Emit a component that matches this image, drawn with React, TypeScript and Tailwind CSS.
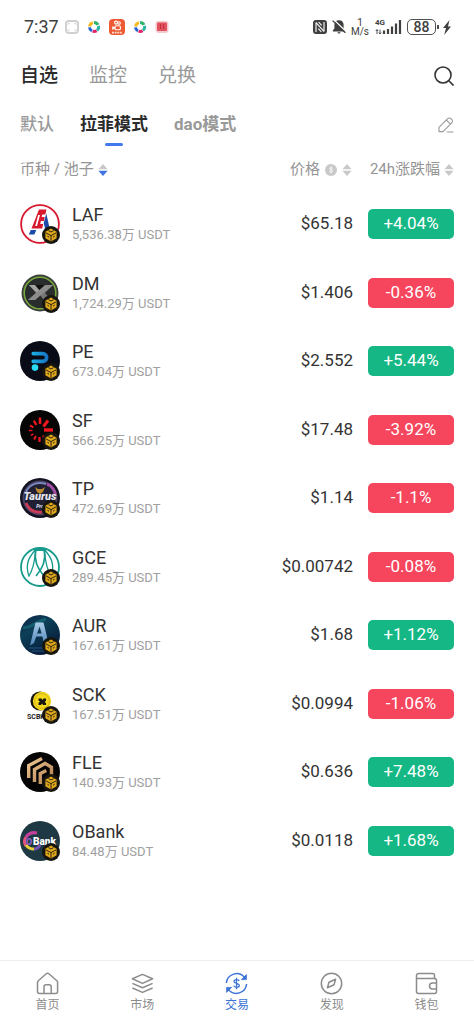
import type { ReactNode } from 'react';

type Token = {
  symbol: string;
  pool: string;
  price: string;
  change: string;
  logo: ReactNode;
};

const LafLogo = () => (
  <>
    <circle cx="20" cy="20" r="18.9" fill="#fff" stroke="#d8182c" strokeWidth="1.8" />
    <path d="M19 5.5h7.5l-1.2 5h-3l-.6 2.6h3l-.8 4h-3l-.7 2.8h3l-1 4.6H11.5z" fill="#d8182c" />
    <path d="M18.2 11h1.8l-3 11h-1.8z" fill="#fff" />
    <path d="M26.3 9.5l3.6 16h-4.6l-1.6-6.5z" fill="#1b4aa8" />
    <path d="M10.8 26h5.4l-1.8 4.5H8.8z" fill="#1b4aa8" />
  </>
);

const DmLogo = () => (
  <>
    <circle cx="20" cy="20" r="18.5" fill="#3c3f3d" />
    <circle cx="20" cy="20" r="15.8" fill="#292c2c" stroke="#78a93a" strokeWidth="1.5" />
    <path d="M9 12h7l4 6 5-6h8l-8 8 6 7h-7l-4-5-5 5H8l8-7z" fill="#777" />
    <path d="M9 12h7l4 5.5-3 2.5z" fill="#a4a4a2" />
    <path d="M15 12h11l-6 6z" fill="#101111" />
    <path d="M8 27l17-15h8L15 27z" fill="#8c8c8a" />
  </>
);

const PeLogo = () => (
  <>
    <defs>
      <linearGradient id="pe" gradientUnits="userSpaceOnUse" x1="11" y1="0" x2="28" y2="0">
        <stop offset="0" stopColor="#1bb8e8" />
        <stop offset="1" stopColor="#176fc2" />
      </linearGradient>
    </defs>
    <circle cx="20" cy="20" r="20" fill="#090c16" />
    <path d="M13.2 12.6h9.6a3.8 3.8 0 0 1 0 7.8h-9.6" fill="none" stroke="url(#pe)" strokeWidth="3.6" strokeLinecap="round" />
    <circle cx="15" cy="26.6" r="3.3" fill="#29dcf4" />
  </>
);

const SfLogo = () => (
  <>
    <circle cx="20" cy="20" r="20" fill="#050505" />
    <g stroke="#ee171f" strokeLinecap="butt">
      <path d="M24 20h9" strokeWidth="3.4" />
      <path d="M23.5 16.5l4.5-6" strokeWidth="3" />
      <path d="M20 14V7.5" strokeWidth="2.6" />
      <path d="M16.4 15l-2.6-4.4" strokeWidth="2.2" />
      <path d="M13.4 17.4l-3.4-2" strokeWidth="1.8" />
      <path d="M12.4 20.5H8.8" strokeWidth="1.4" />
      <path d="M13.4 24l-2.6 1.4" strokeWidth="1.6" />
      <path d="M16 26l-2 3.4" strokeWidth="2" />
      <path d="M19.5 27v5" strokeWidth="2.3" />
      <path d="M23 25.5l2.4 4.2" strokeWidth="2.5" />
    </g>
  </>
);

const TpLogo = () => (
  <>
    <circle cx="20" cy="20" r="20" fill="#111320" />
    <circle cx="20" cy="20" r="16.5" fill="#211f34" stroke="#4b4264" strokeWidth="2" />
    <path d="M6 14C10 5 19 4 26 6" fill="none" stroke="#7887bd" strokeWidth="2" />
    <path d="M27 6c5 2 8 7 8.5 11" fill="none" stroke="#a04da2" strokeWidth="3" />
    <path d="M6 25c3 7 9 10 16 9" fill="none" stroke="#c63b55" strokeWidth="3" />
    <path d="M15 9l3 2h4l3-2-2 5-3 2-3-2z" fill="#ba8a2e" />
    <text x="20" y="22" textAnchor="middle" fontSize="11" fontWeight="900" fontStyle="italic" fill="#e4e4ea">Taurus</text>
    <text x="20" y="29.5" textAnchor="middle" fontSize="5" fontWeight="900" fontStyle="italic" fill="#dcdce2">Pro</text>
  </>
);

const GceLogo = () => (
  <g fill="none" stroke="#159a8b" strokeWidth="1.3">
    <circle cx="20" cy="20" r="19" fill="#fff" strokeWidth="1.8" />
    <path d="M14.5 2c3-1.4 8-1.4 11 0l1.5 3.4c-4-1.8-10-1.8-14 0z" fill="#159a8b" stroke="none" />
    <path d="M14.5 4C8 11 5.5 20 9 29c3.6-6 5.6-14 6.5-24" />
    <path d="M25.5 4c6.5 7 9 16 5.5 25-3.6-6-5.6-14-6.5-24" />
    <path d="M15.6 4c-1.6 9 1.4 17 8.4 25" strokeWidth="1.7" />
    <path d="M24.4 4c1.6 9-1.4 17-8.4 25" strokeWidth="1.7" />
  </g>
);

const AurLogo = () => (
  <>
    <defs>
      <linearGradient id="aurSky" x1="0" y1="0" x2="0.6" y2="1">
        <stop offset="0" stopColor="#0b2142" />
        <stop offset="0.4" stopColor="#0c4058" />
        <stop offset="1" stopColor="#071a38" />
      </linearGradient>
      <linearGradient id="aurA" x1="0" y1="0" x2="0" y2="1">
        <stop offset="0" stopColor="#a9cbe8" />
        <stop offset="1" stopColor="#4d83b8" />
      </linearGradient>
    </defs>
    <circle cx="20" cy="20" r="20" fill="url(#aurSky)" />
    <path d="M3 13c10-1 14-7 23-9" fill="none" stroke="#19808a" strokeWidth="3" opacity="0.5" />
    <path d="M15.5 7.5h8L28 26h-4.6l-1-4.6h-6.2L14 28l-4 2.4zM19.6 11.5L17 18.6h4.6z" fill="url(#aurA)" fillRule="evenodd" />
    <path d="M9 33h14M12 36h12" stroke="#2e6a9d" opacity="0.7" />
  </>
);

const SckLogo = () => (
  <>
    <circle cx="20" cy="17" r="9.6" fill="#15140e" />
    <circle cx="22" cy="17" r="9.2" fill="#f4d81c" />
    <circle cx="22" cy="17" r="7.4" fill="none" stroke="#c7aa13" strokeWidth="0.7" />
    <path d="M18.5 14.5h3l1 1.5 1-1.5h2.5v2.2L24.5 18l1.5 1v2h-3l-1-1.5-1 1.5h-2.5v-2.2L20 17.6l-1.5-1z" fill="#17160f" />
    <text x="7" y="35" fontSize="7" fontWeight="700" fill="#1a1a1a">SCBK</text>
  </>
);

const FleLogo = () => (
  <>
    <defs>
      <linearGradient id="fle" gradientUnits="userSpaceOnUse" x1="6" y1="6" x2="34" y2="34">
        <stop offset="0" stopColor="#f0cc98" />
        <stop offset="1" stopColor="#ac7847" />
      </linearGradient>
    </defs>
    <circle cx="20" cy="20" r="20" fill="#050404" />
    <g fill="none" stroke="url(#fle)" strokeWidth="3.4">
      <path d="M8.7 26V13.6L22 6.6" />
      <path d="M14.5 30V17.4l10.5-6 6.5 3.8V26" />
      <path d="M20.3 32V21.6l6-3.2" />
    </g>
  </>
);

const ObankLogo = () => (
  <>
    <circle cx="20" cy="20" r="20" fill="#1e3943" />
    <g fill="none" strokeWidth="3">
      <path d="M17 12c-4-1-8 0-11 4" stroke="#c53f9d" />
      <path d="M6 16c-2 3-2 6 0 9" stroke="#e4547b" />
      <path d="M6 24c2 3 5 4 8 4" stroke="#e8cf3c" />
      <path d="M14 28c3 0 5-2 6-4" stroke="#7453b4" />
    </g>
    <text x="6" y="23.5" fontSize="9" fontWeight="900" fill="#8e62c9">O</text>
    <text x="13" y="23.5" fontSize="10" fontWeight="900" fill="#fff">Bank</text>
  </>
);

const tokens: Token[] = [
  { symbol: 'LAF', pool: '5,536.38万 USDT', price: '$65.18', change: '+4.04%', logo: <LafLogo /> },
  { symbol: 'DM', pool: '1,724.29万 USDT', price: '$1.406', change: '-0.36%', logo: <DmLogo /> },
  { symbol: 'PE', pool: '673.04万 USDT', price: '$2.552', change: '+5.44%', logo: <PeLogo /> },
  { symbol: 'SF', pool: '566.25万 USDT', price: '$17.48', change: '-3.92%', logo: <SfLogo /> },
  { symbol: 'TP', pool: '472.69万 USDT', price: '$1.14', change: '-1.1%', logo: <TpLogo /> },
  { symbol: 'GCE', pool: '289.45万 USDT', price: '$0.00742', change: '-0.08%', logo: <GceLogo /> },
  { symbol: 'AUR', pool: '167.61万 USDT', price: '$1.68', change: '+1.12%', logo: <AurLogo /> },
  { symbol: 'SCK', pool: '167.51万 USDT', price: '$0.0994', change: '-1.06%', logo: <SckLogo /> },
  { symbol: 'FLE', pool: '140.93万 USDT', price: '$0.636', change: '+7.48%', logo: <FleLogo /> },
  { symbol: 'OBank', pool: '84.48万 USDT', price: '$0.0118', change: '+1.68%', logo: <ObankLogo /> },
];

const ChainBadge = () => (
  <svg viewBox="0 0 18 18" className="absolute right-0 bottom-0 w-[18px] h-[18px]" aria-hidden="true">
    <circle cx="9" cy="9" r="9" fill="#17150f" />
    <path d="M9 2.6l5.6 3.1v6.6L9 15.4l-5.6-3.1V5.7z" fill="#e0a81c" />
    <path d="M3.8 6.8L9 9.6l5.2-2.8M9 9.6v5.5M6.4 4.6L9 6l2.6-1.4M5.4 10.2l1.6 1M12.6 10.2l-1.6 1" fill="none" stroke="#17150f" strokeWidth="0.9" />
  </svg>
);

const PinwheelIcon = () => (
  <svg viewBox="0 0 14 14" className="w-[14px] h-[14px]" aria-hidden="true">
    <g fill="none" strokeWidth="3">
      <path d="M2.6 6.5A4.5 4.5 0 0 1 6 2.6" stroke="#f5b921" />
      <path d="M7 2.5a4.5 4.5 0 0 1 4 2.4" stroke="#32b36b" />
      <path d="M11.5 5.8a4.5 4.5 0 0 1-1.6 4.6" stroke="#2bb5a4" />
      <path d="M9.6 10.8a4.5 4.5 0 0 1-4 .4" stroke="#e2246d" />
      <path d="M5 11a4.5 4.5 0 0 1-2.5-3.6" stroke="#2464d8" />
    </g>
  </svg>
);

const StatusBar = () => (
  <div className="flex items-center justify-between h-[54px] pl-6 pr-[23px] text-[#404040]">
    <div className="flex items-center gap-2">
      <span className="text-lg -mr-0.5">7:37</span>
      <svg viewBox="0 0 14 14" className="w-[14px] h-[14px]" aria-hidden="true">
        <rect x="1" y="1" width="12" height="12" rx="3" fill="#fff" stroke="#d0d0d0" strokeWidth="2" />
        <path d="M3 5V3.5h2M9 3.5h2V5M3 9v1.5h2M9 10.5h2V9" fill="none" stroke="#ddd" />
      </svg>
      <PinwheelIcon />
      <svg viewBox="0 0 16 16" className="w-4 h-4" aria-hidden="true">
        <rect x="0" y="0" width="16" height="16" rx="4" fill="#ee5a33" />
        <g fill="none" stroke="#fff" strokeWidth="1.1">
          <circle cx="7" cy="3.6" r="1.5" />
          <circle cx="10" cy="4" r="1.3" />
          <rect x="6" y="6.8" width="5.4" height="4" rx="1.3" />
          <path d="M3.8 8l2 .8-2 1.2z" />
        </g>
        <path d="M3 13.6h10" stroke="#fbd9c6" strokeWidth="1.8" strokeDasharray="2 .6" />
      </svg>
      <PinwheelIcon />
      <svg viewBox="0 0 14 14" className="w-[14px] h-[14px]" aria-hidden="true">
        <rect x="0.5" y="1" width="13" height="12" rx="3" fill="#f6c9cc" />
        <rect x="2" y="2.5" width="10" height="8.5" rx="1" fill="#e0525e" />
        <path d="M5.5 4v5M8.5 4v5" stroke="#c22f3e" />
      </svg>
    </div>
    <div className="flex items-center gap-1">
      <svg viewBox="0 0 14 14" className="w-[14px] h-[14px]" aria-hidden="true">
        <rect x="0" y="0" width="14" height="14" rx="3" fill="#404040" />
        <path d="M3 12V2.4M11 11.6V2" stroke="#fff" strokeWidth="1.1" />
        <path d="M3 2.6l8 8.8M5.6 2l3 3.4M5.4 8.6l3 3.4" stroke="#fff" strokeWidth="1.1" />
      </svg>
      <svg viewBox="0 0 16 16" className="w-4 h-4" aria-hidden="true">
        <path d="M8 1.2c3 0 4.6 2 4.6 4.6v3.6l1.6 2.2v.8H1.8v-.8l1.6-2.2V5.8C3.4 3.2 5 1.2 8 1.2zM6.4 13.3h3.2c-.3 1.6-2.9 1.6-3.2 0z" fill="#404040" />
        <path d="M2.8 .8l13 12.4" stroke="#fff" strokeWidth="1.2" />
        <path d="M1.6 1.6l12.8 12.2" stroke="#404040" strokeWidth="1.3" />
      </svg>
      <span className="flex flex-col items-center w-[18px] text-[10px] leading-[9px]">
        <span>1</span>
        <span>M/s</span>
      </span>
      <span className="relative w-7 h-4 ml-0.5">
        <span className="absolute left-0 top-0 text-[8px] leading-[8px] font-bold">4G</span>
        <svg viewBox="0 0 28 16" className="w-7 h-4" aria-hidden="true">
          <path d="M2 15v-4.4M.8 12L2 10.6 3.2 12M5 10.6V15M3.8 13.6L5 15l1.2-1.4" fill="none" stroke="#404040" strokeWidth="0.9" />
          <path d="M9 15v-3.4M13 15v-5M17 15V7.6M21 15V4.6M25 15V1" stroke="#404040" strokeWidth="2.2" />
        </svg>
      </span>
      <span className="flex items-center">
        <span className="flex items-center justify-center w-[29px] h-4 border border-[#505050] rounded-[5px] text-sm leading-none font-medium">88</span>
        <span className="w-0.5 h-1 ml-px bg-[#505050]" />
      </span>
      <svg viewBox="0 0 8 15" className="w-2 h-[15px]" aria-hidden="true">
        <path d="M6.5 0L0 8h3L1.2 15 8 6.4H5z" fill="#404040" />
      </svg>
    </div>
  </div>
);

const SortIcon = ({ down = false }: { down?: boolean }) => (
  <svg viewBox="0 0 10 12" className="w-[10px] h-3 shrink-0" aria-hidden="true">
    <path d="M5 0l4.6 5.2H.4z" fill="#c9c9c9" />
    <path d="M5 12L.4 6.8h9.2z" fill={down ? '#3f74e3' : '#c9c9c9'} />
  </svg>
);

const TokenRow = ({ token }: { token: Token }) => (
  <tr className="h-[68px] even:h-[69px]">
    <td className="p-0">
      <div className="flex items-center gap-3">
        <span className="relative w-10 h-10 shrink-0">
          <svg viewBox="0 0 40 40" className="w-10 h-10" aria-hidden="true">
            {token.logo}
          </svg>
          <ChainBadge />
        </span>
        <div className="whitespace-nowrap">
          <p className="text-lg leading-[22px] text-[#333]">{token.symbol}</p>
          <p className="text-[13px] leading-[18px] text-[#a0a0a0]">{token.pool}</p>
        </div>
      </div>
    </td>
    <td className="p-0 pr-[15px] text-right text-[17px] text-[#333]">{token.price}</td>
    <td className="p-0 w-[86px]">
      <span
        className={`flex items-center justify-center h-[30px] rounded-[5px] text-[17px] text-white ${
          token.change.startsWith('+') ? 'bg-[#15b785]' : 'bg-[#f5465d]'
        }`}
      >
        {token.change}
      </span>
    </td>
  </tr>
);

const TokenTable = () => (
  <div className="px-5">
    <table className="w-full border-collapse">
      <thead className="text-[15px] text-[#949494]">
        <tr className="h-[38px]">
          <th className="p-0 pb-[3px] font-normal">
            <button className="flex items-center gap-1">
              币种 / 池子 <SortIcon down />
            </button>
          </th>
          <th className="p-0 pb-[3px] font-normal">
            <button className="flex items-center gap-[5px] ml-auto mr-4">
              价格
              <svg viewBox="0 0 12 12" className="w-3 h-3" aria-hidden="true">
                <circle cx="6" cy="6" r="6" fill="#c9c9c9" />
                <path d="M7.6 4.3c-.4-.8-3-.9-3 .4 0 1.4 3 .9 3 2.4 0 1.3-2.8 1.3-3.3.3M6 2.6v6.8" fill="none" stroke="#fff" strokeWidth="0.8" />
              </svg>
              <SortIcon />
            </button>
          </th>
          <th className="p-0 pb-[3px] w-[86px] font-normal">
            <button className="flex items-center gap-1 ml-auto whitespace-nowrap">
              24h涨跌幅 <SortIcon />
            </button>
          </th>
        </tr>
      </thead>
      <tbody>
        {tokens.map((t) => (
          <TokenRow key={t.symbol} token={t} />
        ))}
      </tbody>
    </table>
  </div>
);

const navItems = [
  {
    label: '首页',
    icon: (
      <>
        <path d="M1.5 10.4a2 2 0 0 1 .8-1.6l8-7a2 2 0 0 1 2.6 0l8 7a2 2 0 0 1 .7 1.6v9.1a2 2 0 0 1-2 2H3.5a2 2 0 0 1-2-2z" />
        <path d="M8 21.5v-6.7a2 2 0 0 1 2-2h3.2a2 2 0 0 1 2 2v6.7" />
      </>
    ),
  },
  {
    label: '市场',
    icon: (
      <>
        <path d="M11.5 2.4L21.6 6.8 11.5 11.4 1.4 6.8z" />
        <path d="M1.4 11.4l10.1 4.4 10.1-4.4M1.4 16l10.1 4.4L21.6 16" />
      </>
    ),
  },
  {
    label: '交易',
    active: true,
    icon: (
      <>
        <path d="M1.4 11A10.2 10.2 0 0 1 19.6 5.6M21.6 12A10.2 10.2 0 0 1 3.4 17.4" />
        <path d="M21.4 2.6v5h-5zM1.6 20.4v-5h5z" fill="currentColor" strokeWidth="0.8" />
        <path d="M14.2 9c-.6-1.9-5.2-2-5.2.4 0 2.5 5.4 1.5 5.4 4.1 0 2.4-5.1 2.3-5.7.1M11.5 5.8v11.4" strokeWidth="1.3" />
      </>
    ),
  },
  {
    label: '发现',
    icon: (
      <>
        <circle cx="11.5" cy="11.5" r="10.2" />
        <path d="M15.6 7.2l-1.6 5.6-6.6 3 1.6-5.6z" />
      </>
    ),
  },
  {
    label: '钱包',
    icon: (
      <>
        <path d="M19.5 6.4V3.5a2 2 0 0 0-2-2H3.5a2 2 0 0 0-2 2v16a2 2 0 0 0 2 2h16a2 2 0 0 0 2-2V8.4a2 2 0 0 0-2-2h-18" />
        <path d="M21.5 11h-4a3 3 0 0 0 0 6h4" />
      </>
    ),
  },
];

const BottomNav = () => (
  <nav className="grid grid-cols-5 h-16 mt-auto border-t border-[#eee]">
    {navItems.map((item) => (
      <a
        key={item.label}
        href="#"
        className={`flex flex-col items-center pt-[11px] gap-0.5 ${item.active ? 'text-[#3d74d6]' : 'text-[#8c8c8c]'}`}
      >
        <svg viewBox="0 0 23 23" className="w-[23px] h-[23px]" fill="none" stroke="currentColor" strokeWidth="1.5" strokeLinejoin="round" aria-hidden="true">
          {item.icon}
        </svg>
        <span className="text-xs leading-4">{item.label}</span>
      </a>
    ))}
  </nav>
);

export default function App() {
  return (
    <div className="flex flex-col min-h-screen bg-white font-['Roboto','Noto_Sans_CJK_SC',sans-serif]">
      <StatusBar />
      <header className="flex items-center h-11 px-5 gap-[31px] text-[19px] text-[#999]">
        <button className="font-medium text-[#2b2b2b]">自选</button>
        <button>监控</button>
        <button>兑换</button>
        <button className="ml-auto text-[#333]" aria-label="搜索">
          <svg viewBox="0 0 20 20" className="w-5 h-5" fill="none" stroke="currentColor" strokeWidth="1.6" aria-hidden="true">
            <circle cx="9" cy="9" r="8" />
            <path d="M14.8 14.8l4.7 4.7" />
          </svg>
        </button>
      </header>
      <div className="flex items-center h-[54px] px-5 gap-[26px] text-[17px] text-[#999]">
        <button className="font-medium">默认</button>
        <button className="relative font-bold text-[#2b2b2b]">
          拉菲模式
          <span className="absolute left-1/2 -bottom-2 w-[18px] h-[3px] -translate-x-1/2 rounded-full bg-[#4179ee]" />
        </button>
        <button className="font-bold">dao模式</button>
        <button className="ml-auto" aria-label="编辑">
          <svg viewBox="0 0 16 16" className="w-4 h-4" fill="none" stroke="currentColor" strokeWidth="1.1" strokeLinejoin="round" aria-hidden="true">
            <path d="M1 14.6v-4.2l8.6-8.7a2.4 2.4 0 0 1 3.4 0l.7.7a2.4 2.4 0 0 1 0 3.4L5 14.6zM8.4 3.2l4 4M8.8 15h6.6" />
          </svg>
        </button>
      </div>
      <TokenTable />
      <BottomNav />
    </div>
  );
}
